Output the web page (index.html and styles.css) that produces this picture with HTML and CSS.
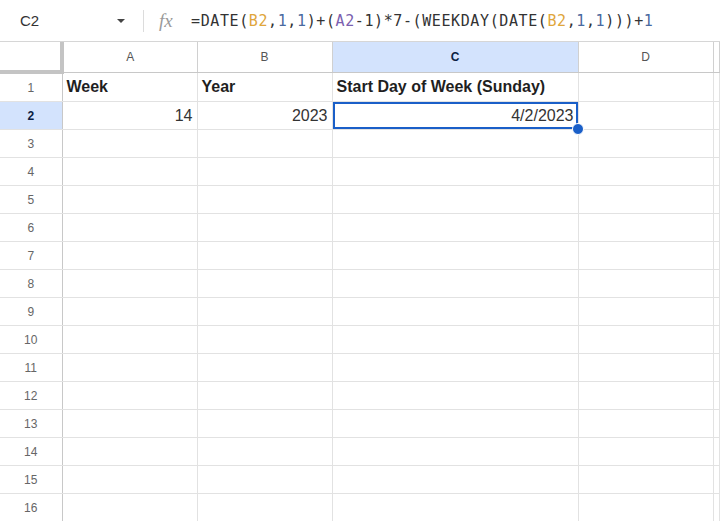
FILE: index.html
```html
<!DOCTYPE html>
<html lang="en">
<head>
  <meta charset="UTF-8">
  <title>Sheet</title>
  <link rel="stylesheet" href="styles.css">
</head>
<body>

  <div class="formula-bar">
    <div class="name-box">C2</div>
    <div class="name-arrow"></div>
    <div class="bar-sep"></div>
    <div class="fx">fx</div>
    <div class="formula">=DATE(<span class="ref-b">B2</span>,<span class="num">1</span>,<span class="num">1</span>)+(<span class="ref-a">A2</span>-1)*7-(WEEKDAY(DATE(<span class="ref-b">B2</span>,<span class="num">1</span>,<span class="num">1</span>)))+<span class="num">1</span></div>
  </div>

  <table class="sheet">
    <colgroup>
      <col class="c-row">
      <col class="c-a">
      <col class="c-b">
      <col class="c-c">
      <col class="c-d">
      <col>
    </colgroup>
    <tr class="col-head">
      <th class="corner"></th>
      <th>A</th>
      <th>B</th>
      <th class="active">C</th>
      <th>D</th>
      <th></th>
    </tr>
    <tr>
      <th class="row-num">1</th>
      <td class="bold">Week</td>
      <td class="bold">Year</td>
      <td class="bold">Start Day of Week (Sunday)</td>
      <td></td><td></td>
    </tr>
    <tr>
      <th class="row-num active">2</th>
      <td class="num-cell">14</td>
      <td class="num-cell">2023</td>
      <td class="num-cell selected">4/2/2023<span class="handle"></span></td>
      <td></td><td></td>
    </tr>
    <tr><th class="row-num">3</th><td></td><td></td><td></td><td></td><td></td></tr>
    <tr><th class="row-num">4</th><td></td><td></td><td></td><td></td><td></td></tr>
    <tr><th class="row-num">5</th><td></td><td></td><td></td><td></td><td></td></tr>
    <tr><th class="row-num">6</th><td></td><td></td><td></td><td></td><td></td></tr>
    <tr><th class="row-num">7</th><td></td><td></td><td></td><td></td><td></td></tr>
    <tr><th class="row-num">8</th><td></td><td></td><td></td><td></td><td></td></tr>
    <tr><th class="row-num">9</th><td></td><td></td><td></td><td></td><td></td></tr>
    <tr><th class="row-num">10</th><td></td><td></td><td></td><td></td><td></td></tr>
    <tr><th class="row-num">11</th><td></td><td></td><td></td><td></td><td></td></tr>
    <tr><th class="row-num">12</th><td></td><td></td><td></td><td></td><td></td></tr>
    <tr><th class="row-num">13</th><td></td><td></td><td></td><td></td><td></td></tr>
    <tr><th class="row-num">14</th><td></td><td></td><td></td><td></td><td></td></tr>
    <tr><th class="row-num">15</th><td></td><td></td><td></td><td></td><td></td></tr>
    <tr><th class="row-num">16</th><td></td><td></td><td></td><td></td><td></td></tr>
  </table>

</body>
</html>
```

FILE: styles.css
```css
body {
  margin: 0;
  background: #fff;
  font-family: "Liberation Sans", Arial, sans-serif;
  color: #222;
  overflow: hidden;
}

.formula-bar {
  height: 41px;
  display: flex;
  align-items: center;
  border-bottom: 1px solid #d6d6d6;
}

.name-box {
  width: 97px;
  padding-left: 20px;
  font-size: 15px;
  color: #333;
}

.name-arrow {
  width: 0;
  height: 0;
  border-left: 4px solid transparent;
  border-right: 4px solid transparent;
  border-top: 4px solid #444;
}

.bar-sep {
  width: 1px;
  height: 22px;
  background: #dcdcdc;
  margin-left: 18px;
}

.fx {
  margin-left: 15px;
  width: 32px;
  font-family: "Liberation Serif", serif;
  font-style: italic;
  font-size: 19px;
  color: #9a9a9a;
}

.formula {
  font-family: "DejaVu Sans Mono", monospace;
  font-size: 15px;
  letter-spacing: 0.6px;
  color: #333;
}

.ref-b { color: #e0a63c; }
.ref-a { color: #7b5fb0; }
.num { color: #4a6aa0; }

.sheet {
  border-collapse: collapse;
  table-layout: fixed;
  width: 720px;
}

.c-row { width: 62px; }
.c-a { width: 135px; }
.c-b { width: 135px; }
.c-c { width: 246px; }
.c-d { width: 135px; }

.sheet td,
.sheet th {
  height: 27px;
  padding: 0 4px;
  border-right: 1px solid #e2e2e2;
  border-bottom: 1px solid #e2e2e2;
  white-space: nowrap;
  overflow: visible;
}

.col-head th {
  height: 28px;
  font-weight: normal;
  font-size: 12px;
  color: #555;
  text-align: center;
  border-right: 1px solid #d0d0d0;
  border-bottom: 1px solid #c8c8c8;
}

.col-head th.corner {
  border-right: 4px solid #c4c4c4;
  border-bottom: 4px solid #c4c4c4;
}

.row-num {
  font-weight: normal;
  font-size: 12px;
  color: #666;
  text-align: center;
  border-right: 1px solid #c8c8c8 !important;
}

.active {
  background: #d3e3fd;
  color: #0b1f44 !important;
  font-weight: bold !important;
}

.bold {
  font-weight: bold;
  font-size: 16px;
  color: #1f1f1f;
}

.num-cell {
  text-align: right;
  font-size: 16px;
  color: #333;
}

.selected {
  position: relative;
  box-shadow: inset 0 0 0 2px #1a5fc8;
}

.handle {
  position: absolute;
  right: -6px;
  bottom: -6px;
  width: 12px;
  height: 12px;
  border-radius: 50%;
  background: #1a5fc8;
  border: 1px solid #fff;
  box-sizing: border-box;
}
```
